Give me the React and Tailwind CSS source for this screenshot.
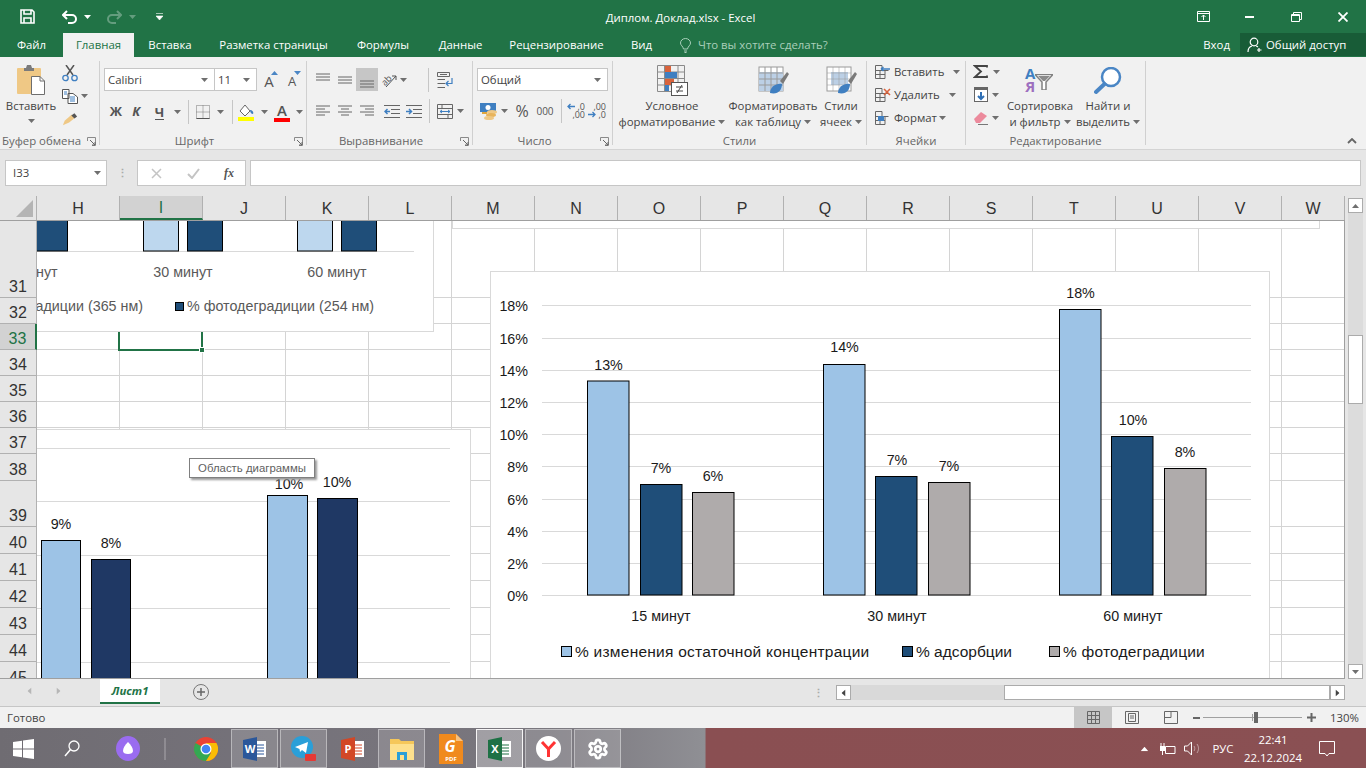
import { Settings } from "lucide-react";

const COLS = ["H", "I", "J", "K", "L", "M", "N", "O", "P", "Q", "R", "S", "T", "U", "V", "W"];
const ROWS = [
  { n: "31", h: "h-[77px]" },
  { n: "32", h: "h-[26px]" },
  { n: "33", h: "h-[26px]", active: true },
  { n: "34", h: "h-[26px]" },
  { n: "35", h: "h-[26px]" },
  { n: "36", h: "h-[26px]" },
  { n: "37", h: "h-[26px]" },
  { n: "38", h: "h-[27px]" },
  { n: "39", h: "h-[46px]" },
  { n: "40", h: "h-[27px]" },
  { n: "41", h: "h-[27px]" },
  { n: "42", h: "h-[27px]" },
  { n: "43", h: "h-[27px]" },
  { n: "44", h: "h-[27px]" },
  { n: "45", h: "h-[27px]" },
];

const Caret = ({ className = "", color = "#6f6f6f" }) => (
  <svg width="7" height="4" viewBox="0 0 7 4" className={`shrink-0 ${className}`}>
    <path d="M0 0H7L3.5 4Z" fill={color} />
  </svg>
);

const Launcher = () => (
  <svg width="9" height="9" viewBox="0 0 9 9" className="absolute right-[3px] -bottom-[1px]">
    <path d="M.5 4V.5H8.5V8.5H5" fill="none" stroke="#8a8a8a" />
    <path d="M3 3L8 8M5 8H8V5" fill="none" stroke="#666" />
  </svg>
);

const Group = ({ className, label, launcher, labelClass = "", children }) => (
  <div className={`relative flex flex-col h-[84px] shrink-0 border-r border-[#d0d0d0] ${className}`}>
    <div className="h-[73px]">{children}</div>
    <div className={`h-[11px] leading-[14px] text-center whitespace-nowrap text-[#666] ${labelClass}`}>{label}</div>
    {launcher && <Launcher />}
  </div>
);

const Slot = ({ className = "", children }) => (
  <div className={`flex items-center justify-center shrink-0 ${className}`}>{children}</div>
);

const VSep = () => <div className="w-px h-[24px] bg-[#c6c6c6] shrink-0" />;

const Lines = ({ ys, xs }) => (
  <svg width="16" height="16" viewBox="0 0 16 16">
    {ys.map((y, i) => (
      <path key={y} d={`M${xs ? xs[i][0] : 1} ${y}H${xs ? xs[i][1] : 15}`} stroke="#666" />
    ))}
  </svg>
);

const PasteIcon = () => (
  <svg width="30" height="30" viewBox="0 0 30 30">
    <rect x="1" y="3" width="24" height="26" rx="1" fill="#efc885" />
    <path d="M8 3H10L11 0H15L16 3H18V6H8Z" fill="#7b7b7b" />
    <path d="M15.500 11.500H24L28.500 16V29.500H15.500Z" fill="#fff" stroke="#6e6e6e" />
    <path d="M24 11.500V16H28.500" fill="none" stroke="#6e6e6e" />
  </svg>
);

const ScissorsIcon = () => (
  <svg width="16" height="17" viewBox="0 0 16 17">
    <path d="M5 10L12 0M11 10L4 0" stroke="#555" strokeWidth="1.500" />
    <circle cx="3.500" cy="13" r="2.700" fill="none" stroke="#3f7fc1" strokeWidth="1.300" />
    <circle cx="12.500" cy="13" r="2.700" fill="none" stroke="#3f7fc1" strokeWidth="1.300" />
  </svg>
);

const CopyIcon = () => (
  <svg width="16" height="15" viewBox="0 0 16 15">
    <path d="M.5.5H7V9.500H.5Z M6 4.500H11L15.500 8V14.500H6Z" fill="#fff" stroke="#555" />
    <path d="M2 3H5M2 5H5M8 8H13M8 10H13M8 12H13" stroke="#3f7fc1" />
  </svg>
);

const BrushIcon = () => (
  <svg width="18" height="15" viewBox="0 0 18 15">
    <path d="M11 2L14 6L8 11L1 14L3 9Z" fill="#efc885" />
    <path d="M10.500 3L14 0.500L17 4L14 6.500Z" fill="#555" />
  </svg>
);

const BigA = ({ up }) => (
  <div className="relative w-[17px] h-[18px] text-center text-[#555]">
    <span className={up ? "text-[15px] leading-[20px]" : "text-[13px] leading-[20px]"}>A</span>
    <svg width="7" height="4" viewBox="0 0 7 4" className="absolute right-0 top-0">
      <path d={up ? "M0 4H7L3.500 0Z" : "M0 0H7L3.500 4Z"} fill="#4a86c5" />
    </svg>
  </div>
);

const BordersIcon = () => (
  <svg width="14" height="14" viewBox="0 0 14 14">
    <path d="M.5.5H13.500V13.500H.5ZM.5 7H13.500M7 .5V13.500" fill="none" stroke="#777" strokeDasharray="1 1" />
    <path d="M.5 13.500H13.500" stroke="#555" />
  </svg>
);

const FillIcon = () => (
  <svg width="17" height="17" viewBox="0 0 17 17">
    <path d="M7 1L12 7L7 12L2 7Z" fill="#fff" stroke="#666" />
    <path d="M12 6C14 6 16 8 15 10C13 10 12 8 12 6Z" fill="#3f7fc1" />
    <rect y="13" width="16" height="4" fill="#ffff00" />
  </svg>
);

const FontColorIcon = () => (
  <div className="flex flex-col items-center w-[16px]">
    <span className="text-[15px] leading-[14px] font-semibold text-[#555]">A</span>
    <div className="w-[16px] h-[4px] bg-[#ff0000] mt-[1px]" />
  </div>
);

const OrientIcon = () => (
  <svg width="17" height="17" viewBox="0 0 17 17">
    <text x="0" y="12" transform="rotate(-45 6 9)" fontSize="9" fill="#555">ab</text>
    <path d="M5 16L15 5M15 5H11M15 5V9" stroke="#555" fill="none" />
  </svg>
);

const WrapIcon = () => (
  <svg width="16" height="16" viewBox="0 0 16 16">
    <path d="M.5.5H12.500V4.500H.5ZM.5 7.500H8M.5 11.500H8M.5 15.500H8" fill="none" stroke="#666" />
    <path d="M3 2.500H10" stroke="#666" />
    <path d="M15 6V11.500H9M11.500 9L9 11.500L11.500 14" fill="none" stroke="#3f7fc1" strokeWidth="1.200" />
  </svg>
);

const MergeIcon = () => (
  <svg width="16" height="15" viewBox="0 0 16 15">
    <path d="M.5.5H15.500V14.500H.5ZM.5 4.500H15.500M.5 10.500H15.500M5 .5V4.500M11 10.500V14.500" fill="none" stroke="#666" />
    <path d="M3 7.500H13M3 7.500L5 6M3 7.500L5 9M13 7.500L11 6M13 7.500L11 9" fill="none" stroke="#3f7fc1" />
  </svg>
);

const IndentIcon = ({ flip }) => (
  <svg width="16" height="13" viewBox="0 0 16 13">
    <path d="M0 .5H16M7 4.500H16M7 8.500H16M0 12.500H16" stroke="#666" />
    {flip ? (
      <path d="M0 6.500H5M3 4L5.500 6.500L3 9" fill="none" stroke="#3f7fc1" strokeWidth="1.500" />
    ) : (
      <path d="M6 6.500H1M3.500 4L1 6.500L3.500 9" fill="none" stroke="#3f7fc1" strokeWidth="1.500" />
    )}
  </svg>
);

const CurrencyIcon = () => (
  <svg width="18" height="17" viewBox="0 0 18 17">
    <rect x="0" y="0" width="16" height="9" fill="#3f7fc1" />
    <circle cx="8" cy="4.500" r="2.500" fill="#fff" />
    <rect x="2" y="9" width="5" height="2" fill="#e0a63e" />
    <ellipse cx="12" cy="9" rx="5" ry="2" fill="#efc885" />
    <ellipse cx="11" cy="12" rx="5" ry="2" fill="#e8b45c" />
    <ellipse cx="9" cy="15" rx="5" ry="2" fill="#efc885" />
  </svg>
);

const DecIcon = ({ more }) => (
  <div className="relative w-[18px] h-[16px] leading-[8px] text-[9px] text-[#555] text-right">
    <div>{more ? ",00" : ",0"}</div>
    <div>{more ? ",0" : ",00"}</div>
    <svg width="8" height="7" viewBox="0 0 8 7" className={more ? "absolute left-0 top-[8px]" : "absolute left-0 top-0"}>
      {more ? (
        <path d="M0 3.500H7M4.500 1L7 3.500L4.500 6" fill="none" stroke="#3f7fc1" strokeWidth="1.300" />
      ) : (
        <path d="M8 3.500H1M3.500 1L1 3.500L3.500 6" fill="none" stroke="#3f7fc1" strokeWidth="1.300" />
      )}
    </svg>
  </div>
);

const CondIcon = () => (
  <svg width="31" height="31" viewBox="0 0 31 31">
    <path d="M.5.5H27.500V26.500H.5ZM.5 7H27.500M.5 13.500H27.500M.5 20H27.500M7.500.5V26.500M21 .5V26.500" fill="none" stroke="#8a8a8a" />
    <rect x="8" y="1" width="6" height="6" fill="#d9633c" />
    <rect x="8" y="7" width="12" height="6" fill="#3f7fc1" />
    <rect x="8" y="14" width="9" height="6" fill="#d9633c" />
    <rect x="8" y="20" width="4" height="6" fill="#3f7fc1" />
    <rect x="14.500" y="17.500" width="16" height="13" fill="#fff" stroke="#555" />
    <path d="M19 22H26M19 26H26M25 20L20 28" stroke="#444" />
  </svg>
);

const TableStyleIcon = ({ blue }) => (
  <svg width="31" height="30" viewBox="0 0 31 30">
    <rect x="1" y="1" width="24" height="24" fill="#fff" stroke="#9a9a9a" />
    <rect x={blue ? 1 : 5} y={6} width={blue ? 24 : 17} height={blue ? 19 : 13} fill="#bcd0e6" />
    <path d="M1 7H25M1 13H25M1 19H25M7 1V25M13 1V25M19 1V25" stroke="#9a9a9a" strokeOpacity={blue ? 1 : 0.5} />
    <path d="M22 15L29 6L31 8L25 18Z" fill="#7a7a7a" />
    <path d="M12 27C12 21 18 17 24 18C24 24 20 29 12 27Z" fill="#3f7fc1" />
  </svg>
);

const CellIcon = ({ kind }) => (
  <svg width="17" height="16" viewBox="0 0 17 16">
    <path d="M1.500 1.500H8V6.500H14.500M1.500 1.500V14.500H11V6.500M1.500 6.500H8M1.500 10.500H11M6 6.500V14.500" fill="none" stroke="#666" />
    {kind === "ins" && <path d="M16 5H7M7 5L9.500 3M7 5L9.500 7" fill="none" stroke="#3f7fc1" strokeWidth="1.500" />}
    {kind === "del" && <path d="M10 2L16 8M16 2L10 8" stroke="#d9633c" strokeWidth="1.600" />}
    {kind === "fmt" && <rect x="4" y="6" width="6" height="5" fill="#3f7fc1" />}
  </svg>
);

const SumIcon = () => (
  <svg width="15" height="13" viewBox="0 0 15 13">
    <path d="M14 2.500V1H2L8 6.500L2 12H14V10.500" fill="none" stroke="#444" strokeWidth="1.800" />
  </svg>
);

const FillDownIcon = () => (
  <svg width="14" height="15" viewBox="0 0 14 15">
    <rect x=".5" y=".5" width="13" height="14" fill="#fff" stroke="#666" />
    <rect width="14" height="3" fill="#666" />
    <path d="M7 5V12M4 9L7 12L10 9" fill="none" stroke="#2f6fb5" strokeWidth="2" />
  </svg>
);

const EraserIcon = () => (
  <svg width="15" height="14" viewBox="0 0 15 14">
    <path d="M1 8L8 1L14 5L7 12H3Z" fill="#ec8a9c" />
    <path d="M5 13.500H15" stroke="#777" />
  </svg>
);

const SortIcon = () => (
  <div className="flex items-start w-[30px] h-[28px]">
    <div className="flex flex-col items-center leading-[13px] text-[15px] font-bold">
      <span className="text-[#3f7fc1]">А</span>
      <span className="text-[#9d6fbf]">Я</span>
    </div>
    <svg width="18" height="16" viewBox="0 0 18 16" className="mt-[7px]">
      <path d="M0 .5H18L11 8V16H7V8Z" fill="#fff" stroke="#808080" strokeWidth="1.500" />
      <path d="M3 2H15L10 7H8Z" fill="#8a8a8a" />
    </svg>
  </div>
);

const FindIcon = () => (
  <svg width="28" height="28" viewBox="0 0 28 28">
    <circle cx="17" cy="10" r="9" fill="#fff" stroke="#4a86c5" strokeWidth="2.500" />
    <path d="M10.500 17L2 25" stroke="#4a86c5" strokeWidth="4" strokeLinecap="round" />
  </svg>
);

const TitleBar = () => (
  <div className="flex items-center h-[33px] text-white relative">
    <Slot className="w-[54px]">
      <svg width="15" height="15" viewBox="0 0 15 15">
        <path d="M1 1H12L14 3V14H1Z M4 1V5H11V1 M4 14V9H11V14" fill="none" stroke="#fff" strokeWidth="1.600" />
      </svg>
    </Slot>
    <Slot className="w-[26px] ml-[3px]">
      <svg width="16" height="14" viewBox="0 0 16 14">
        <path d="M1 5H10A4 4 0 0 1 10 13H6M5 1L1 5L5 9" fill="none" stroke="#fff" strokeWidth="2" />
      </svg>
    </Slot>
    <Caret color="#fff" className="ml-[1px]" />
    <Slot className="w-[30px] opacity-30 ml-[8px]">
      <svg width="16" height="14" viewBox="0 0 16 14">
        <path d="M15 5H6A4 4 0 0 0 6 13H10M11 1L15 5L11 9" fill="none" stroke="#fff" strokeWidth="2" />
      </svg>
    </Slot>
    <Caret color="#fff" className="opacity-30" />
    <Slot className="w-[40px] ml-[3px]">
      <svg width="7" height="7" viewBox="0 0 7 7">
        <path d="M0 .5H7M0 3H7L3.500 7Z" fill="#fff" stroke="#fff" strokeWidth=".6" />
      </svg>
    </Slot>
    <div className="flex-1 text-center pl-[2px] pt-[2px]">Диплом. Доклад.xlsx - Excel</div>
    <Slot className="w-[46px]">
      <svg width="13" height="11" viewBox="0 0 13 11">
        <path d="M.5.5H12.500V10.500H.5ZM.5 2.500H12.500M6.500 9V4M4.500 6L6.500 4L8.500 6" fill="none" stroke="#fff" />
      </svg>
    </Slot>
    <Slot className="w-[47px]"><div className="w-[9px] h-[2px] bg-white" /></Slot>
    <Slot className="w-[47px]">
      <svg width="11" height="10" viewBox="0 0 11 10">
        <path d="M.5 2.500H8.500V9.500H.5ZM2.500 2.500V.5H10.500V7.500H8.500M.5 3.500H8.500" fill="none" stroke="#fff" />
      </svg>
    </Slot>
    <Slot className="w-[46px]">
      <svg width="10" height="10" viewBox="0 0 10 10">
        <path d="M.5.5L9.500 9.500M9.500.5L.5 9.500" stroke="#fff" strokeWidth="1.800" />
      </svg>
    </Slot>
  </div>
);

const Tab = ({ className, active, children }) => (
  <div
    className={`flex items-center justify-center h-[24px] shrink-0 ${className} ${
      active ? "bg-[#f1f1f1] text-[#217346]" : "text-white"
    }`}
  >
    {children}
  </div>
);

const TabBar = () => (
  <div className="flex h-[24px]">
    <Tab className="w-[63px]">Файл</Tab>
    <Tab className="w-[71px]" active>Главная</Tab>
    <Tab className="w-[72px]">Вставка</Tab>
    <Tab className="w-[135px]">Разметка страницы</Tab>
    <Tab className="w-[84px]">Формулы</Tab>
    <Tab className="w-[71px]">Данные</Tab>
    <Tab className="w-[121px]">Рецензирование</Tab>
    <Tab className="w-[49px]">Вид</Tab>
    <div className="flex items-center text-[#a9cfba] ml-[14px]">
      <svg width="11" height="15" viewBox="0 0 11 15" className="mr-[7px]">
        <path d="M3.500 11C3 8 .5 7.500.5 5A5 4.500 0 0 1 10.500 5C10.500 7.500 8 8 7.500 11ZM4 13H7M4.500 14.500H6.500" fill="none" stroke="#a9cfba" />
      </svg>
      Что вы хотите сделать?
    </div>
    <div className="flex-1" />
    <div className="flex items-center text-white pr-[10px]">Вход</div>
    <div className="flex items-center w-[126px] h-[23px] bg-[#185c37] text-white pl-[7px]">
      <svg width="16" height="16" viewBox="0 0 16 16" className="mr-[3px]">
        <circle cx="7" cy="5" r="3.800" fill="none" stroke="#fff" strokeWidth="1.200" />
        <path d="M1 15C1 11 3 9.500 5 9M9 9C10 9.300 10.500 9.700 11 10M12 11V15M10 13H14.500" fill="none" stroke="#fff" strokeWidth="1.200" />
      </svg>
      Общий доступ
    </div>
  </div>
);

const Combo = ({ className, children }) => (
  <div className={`flex items-center justify-between h-[23px] bg-white border border-[#c6c6c6] pl-[3px] pr-[6px] text-[#444] ${className}`}>
    <span>{children}</span>
    <Caret />
  </div>
);

const Ribbon = () => (
  <div className="flex h-[93px] pt-[4px] bg-[#f1f1f1] border-b border-[#d4d4d4]">
    <Group className="w-[100px]" label="Буфер обмена" labelClass="pr-[16px]" launcher>
      <div className="flex">
        <div className="flex flex-col items-center w-[62px] pt-[4px] text-[#444]">
          <PasteIcon />
          <div className="leading-[16px] mt-[3px]">Вставить</div>
          <Caret className="mt-[5px]" />
        </div>
        <div className="flex flex-col pt-[1px]">
          <Slot className="w-[16px] h-[22px]"><ScissorsIcon /></Slot>
          <div className="flex items-center h-[24px]">
            <Slot className="w-[16px]"><CopyIcon /></Slot>
            <Caret className="ml-[3px]" />
          </div>
          <Slot className="w-[16px] h-[22px]"><BrushIcon /></Slot>
        </div>
      </div>
    </Group>

    <Group className="w-[207px]" label="Шрифт" labelClass="pr-[17px]" launcher>
      <div className="flex items-center mt-[7px] ml-[4px]">
        <Combo className="w-[111px]">Calibri</Combo>
        <Combo className="w-[43px] -ml-px">11</Combo>
        <Slot className="w-[22px] ml-[1px]"><BigA up /></Slot>
        <Slot className="w-[24px]"><BigA /></Slot>
      </div>
      <div className="flex items-center mt-[9px] ml-[6px] h-[24px] text-[#555]">
        <Slot className="w-[20px] font-bold text-[13px]">Ж</Slot>
        <Slot className="w-[20px] font-bold italic text-[13px]">К</Slot>
        <Slot className="w-[27px] font-bold text-[13px]"><span className="border-b border-[#555] leading-[14px]">Ч</span></Slot>
        <Caret className="ml-[1px]" />
        <div className="ml-[7px]"><VSep /></div>
        <Slot className="w-[28px]"><BordersIcon /></Slot>
        <Caret />
        <div className="ml-[8px]"><VSep /></div>
        <Slot className="w-[27px]"><FillIcon /></Slot>
        <Caret className="ml-[1px]" />
        <Slot className="w-[28px]"><FontColorIcon /></Slot>
        <Caret />
      </div>
    </Group>

    <Group className="w-[166px]" label="Выравнивание" labelClass="pr-[17px]" launcher>
      <div className="flex items-center mt-[7px] ml-[5px] h-[23px]">
        <Slot className="w-[22px]"><Lines ys={[2, 5, 8]} /></Slot>
        <Slot className="w-[22px]"><Lines ys={[5, 8, 11]} /></Slot>
        <Slot className="w-[22px] h-[23px] bg-[#c6c6c6]"><Lines ys={[9, 12, 15]} /></Slot>
        <Slot className="w-[22px]"><OrientIcon /></Slot>
        <Caret />
        <div className="ml-[21px]"><VSep /></div>
        <Slot className="w-[16px] ml-[8px]"><WrapIcon /></Slot>
      </div>
      <div className="flex items-center mt-[8px] ml-[5px] h-[24px]">
        <Slot className="w-[22px]"><Lines ys={[3, 6, 9, 12]} xs={[[1, 15], [1, 10], [1, 15], [1, 10]]} /></Slot>
        <Slot className="w-[22px]"><Lines ys={[3, 6, 9, 12]} xs={[[1, 15], [4, 12], [1, 15], [4, 12]]} /></Slot>
        <Slot className="w-[22px]"><Lines ys={[3, 6, 9, 12]} xs={[[1, 15], [6, 15], [1, 15], [6, 15]]} /></Slot>
        <Slot className="w-[28px]"><IndentIcon /></Slot>
        <Slot className="w-[16px]"><IndentIcon flip /></Slot>
        <Slot className="w-[14px]"><VSep /></Slot>
        <Slot className="w-[18px]"><MergeIcon /></Slot>
        <Caret className="ml-[3px]" />
      </div>
    </Group>

    <Group className="w-[140px]" label="Число" labelClass="pr-[16px]" launcher>
      <Combo className="w-[131px] ml-[4px] mt-[7px]">Общий</Combo>
      <div className="flex items-center mt-[8px] ml-[6px] h-[24px] text-[#555]">
        <Slot className="w-[20px]"><CurrencyIcon /></Slot>
        <Caret className="ml-[2px]" />
        <Slot className="w-[28px] text-[16px]">%</Slot>
        <Slot className="w-[18px] text-[10px]">000</Slot>
        <Slot className="w-[9px] ml-[3px]"><VSep /></Slot>
        <Slot className="w-[20px]"><DecIcon /></Slot>
        <Slot className="w-[22px]"><DecIcon more /></Slot>
      </div>
    </Group>

    <Group className="w-[254px]" label="Стили">
      <div className="flex text-[#444] leading-[16px]">
        <div className="flex flex-col items-center w-[118px] shrink-0">
          <Slot className="w-[31px] h-[31px] mt-[4px]"><CondIcon /></Slot>
          <div className="mt-[2px]">Условное</div>
          <div className="flex items-center">форматирование<Caret className="ml-[3px]" /></div>
        </div>
        <div className="flex flex-col items-center w-[84px] shrink-0">
          <Slot className="w-[31px] h-[31px] mt-[4px]"><TableStyleIcon blue /></Slot>
          <div className="mt-[2px]">Форматировать</div>
          <div className="flex items-center">как таблицу<Caret className="ml-[3px]" /></div>
        </div>
        <div className="flex flex-col items-center w-[52px] shrink-0">
          <Slot className="w-[31px] h-[31px] mt-[4px]"><TableStyleIcon /></Slot>
          <div className="mt-[2px]">Стили</div>
          <div className="flex items-center">ячеек<Caret className="ml-[3px]" /></div>
        </div>
      </div>
    </Group>

    <Group className="w-[99px]" label="Ячейки">
      <div className="flex flex-col pl-[7px] text-[#444] -mt-[1px]">
        <div className="flex items-center h-[23px]"><CellIcon kind="ins" /><span className="ml-[3px] mr-[9px]">Вставить</span><Caret /></div>
        <div className="flex items-center h-[23px]"><CellIcon kind="del" /><span className="ml-[3px] mr-[9px]">Удалить</span><Caret /></div>
        <div className="flex items-center h-[23px]"><CellIcon kind="fmt" /><span className="ml-[3px] mr-[2px]">Формат</span><Caret /></div>
      </div>
    </Group>

    <Group className="w-[180px]" label="Редактирование">
      <div className="flex text-[#444] leading-[16px]">
        <div className="flex flex-col pl-[7px] w-[41px] shrink-0 -mt-[1px]">
          <div className="flex items-center h-[23px]"><Slot className="w-[15px]"><SumIcon /></Slot><Caret className="ml-[5px]" /></div>
          <div className="flex items-center h-[23px]"><Slot className="w-[15px]"><FillDownIcon /></Slot><Caret className="ml-[4px]" /></div>
          <div className="flex items-center h-[23px]"><Slot className="w-[15px]"><EraserIcon /></Slot><Caret className="ml-[4px]" /></div>
        </div>
        <div className="flex flex-col items-center w-[66px] shrink-0">
          <Slot className="h-[31px] mt-[4px]"><SortIcon /></Slot>
          <div className="mt-[2px]">Сортировка</div>
          <div className="flex items-center">и фильтр<Caret className="ml-[3px]" /></div>
        </div>
        <div className="flex flex-col items-center w-[70px] shrink-0">
          <Slot className="h-[31px] mt-[4px]"><FindIcon /></Slot>
          <div className="mt-[2px]">Найти и</div>
          <div className="flex items-center">выделить<Caret className="ml-[3px]" /></div>
        </div>
      </div>
    </Group>

    <div className="flex-1 flex items-end justify-end pr-[9px] pb-[5px]">
      <svg width="10" height="6" viewBox="0 0 10 6">
        <path d="M1 5L5 1L9 5" fill="none" stroke="#666" strokeWidth="1.800" />
      </svg>
    </div>
  </div>
);

const FormulaBar = () => (
  <div className="flex items-center h-[46px] pb-[10px] pt-[10px] bg-[#e6e6e6] text-[#444]">
    <div className="flex items-center justify-between w-[102px] h-[26px] ml-[5px] pl-[7px] pr-[5px] bg-white border border-[#c6c6c6]">
      <span>I33</span>
      <Caret />
    </div>
    <div className="w-[30px] flex justify-center text-[#aaa] leading-[10px] text-[11px] font-bold">⋮</div>
    <div className="flex items-center w-[109px] h-[26px] bg-white border border-[#c6c6c6]">
      <Slot className="w-[37px]">
        <svg width="11" height="11" viewBox="0 0 11 11"><path d="M1 1L10 10M10 1L1 10" stroke="#c4c4c4" strokeWidth="1.500" /></svg>
      </Slot>
      <Slot className="w-[36px]">
        <svg width="13" height="11" viewBox="0 0 13 11"><path d="M1 6L5 10L12 1" fill="none" stroke="#c4c4c4" strokeWidth="2" /></svg>
      </Slot>
      <Slot className="w-[36px] text-[#555] italic font-bold text-[12px] [font-family:'Liberation_Serif',serif]">fx</Slot>
    </div>
    <div className="flex-1 h-[26px] ml-[4px] mr-[5px] bg-white border border-[#c6c6c6]" />
  </div>
);

const ChartText = ({ x, y, anchor = "middle", children, className = "fill-[#1a1a1a]" }) => (
  <text x={x} y={y} textAnchor={anchor} dominantBaseline="central" className={className}>
    {children}
  </text>
);

const Bar = ({ x, w, top, bottom, fill }) => (
  <rect x={x} y={top} width={w} height={bottom - top} fill={fill} stroke="#000" strokeWidth="1" />
);

const TopLeftChart = () => (
  <div className="absolute left-0 top-0 w-[397px] h-[111px] bg-white border-r border-b border-[#d9d9d9]">
    <svg width="396" height="110" viewBox="37 221 396 110" className="text-[14.3px] [font-family:'Liberation_Sans',sans-serif]">
      <path d="M37 251.500H414" stroke="#d9d9d9" />
      {[
        [30, 37.500, "#1f4e79"],
        [143.500, 35, "#bdd7ee"],
        [187.500, 35, "#1f4e79"],
        [297.500, 35, "#bdd7ee"],
        [341.500, 35, "#1f4e79"],
      ].map(([x, w, fill]) => (
        <Bar key={x} x={x} w={w} top={215} bottom={251} fill={fill} />
      ))}
      <ChartText x={28} y={272} className="fill-[#595959]">15 минут</ChartText>
      <ChartText x={183} y={272} className="fill-[#595959]">30 минут</ChartText>
      <ChartText x={337} y={272} className="fill-[#595959]">60 минут</ChartText>
      <ChartText x={143} y={306} anchor="end" className="fill-[#595959]">% фотодеградиции (365 нм)</ChartText>
      <rect x="175.500" y="302.500" width="8" height="8" fill="#1f4e79" stroke="#000" />
      <ChartText x={187} y={306} anchor="start" className="fill-[#595959]">% фотодеградиции (254 нм)</ChartText>
    </svg>
  </div>
);

const TopBand = () => (
  <div className="absolute left-[415px] top-0 w-[868px] h-[8px] bg-white border-l border-r border-b border-[#d9d9d9]" />
);

const LeftChart = () => (
  <div className="absolute left-0 top-[208px] w-[434px] h-[250px] bg-white border-t border-r border-[#d9d9d9]">
    <svg width="433" height="249" viewBox="37 430 433 249" className="text-[14.3px] [font-family:'Liberation_Sans',sans-serif]">
      {[448.500, 501.500, 555.500, 608.500, 662.500].map((y) => (
        <path key={y} d={`M37 ${y}H450`} stroke="#d9d9d9" />
      ))}
      <Bar x={41.500} w={39} top={540.500} bottom={700} fill="#9dc3e6" />
      <Bar x={91.500} w={39} top={559.500} bottom={700} fill="#1f3864" />
      <Bar x={267.500} w={40} top={495.500} bottom={700} fill="#9dc3e6" />
      <Bar x={317.500} w={40} top={498.500} bottom={700} fill="#1f3864" />
      <ChartText x={61} y={524}>9%</ChartText>
      <ChartText x={111} y={543}>8%</ChartText>
      <ChartText x={289} y={484}>10%</ChartText>
      <ChartText x={337} y={482}>10%</ChartText>
    </svg>
    <div className="absolute left-[152px] top-[28px] w-[126px] h-[20px] bg-white border border-[#7f7f7f] shadow-[2px_2px_2px_#9a9a9a] text-center text-[#5f5f5f] leading-[18px]">
      Область диаграммы
    </div>
  </div>
);

const AXIS = [
  ["18%", 305.500], ["16%", 338.500], ["14%", 370.500], ["12%", 402.500], ["10%", 434.500],
  ["8%", 466.500], ["6%", 499.500], ["4%", 531.500], ["2%", 563.500], ["0%", 595.500],
];

const BARS = [
  { x: 587.500, top: 381, fill: "#9dc3e6", label: "13%", lx: 608.500, ly: 365 },
  { x: 640.500, top: 484.500, fill: "#1f4e79", label: "7%", lx: 661, ly: 468 },
  { x: 692.500, top: 492.500, fill: "#afabab", label: "6%", lx: 713, ly: 476 },
  { x: 823.500, top: 364.500, fill: "#9dc3e6", label: "14%", lx: 844.500, ly: 347 },
  { x: 875.500, top: 476.500, fill: "#1f4e79", label: "7%", lx: 897, ly: 460 },
  { x: 928.500, top: 482.500, fill: "#afabab", label: "7%", lx: 949, ly: 466 },
  { x: 1059.500, top: 309.500, fill: "#9dc3e6", label: "18%", lx: 1080.500, ly: 293 },
  { x: 1111.500, top: 436.500, fill: "#1f4e79", label: "10%", lx: 1133, ly: 420 },
  { x: 1164.500, top: 468.500, fill: "#afabab", label: "8%", lx: 1185, ly: 452 },
];

const RightChart = () => (
  <div className="absolute left-[453px] top-[50px] w-[780px] h-[408px] bg-white border-l border-t border-r border-[#d9d9d9]">
    <svg width="778" height="407" viewBox="491 272 778 407" className="text-[14.3px] [font-family:'Liberation_Sans',sans-serif]">
      {AXIS.map(([t, y]) => (
        <g key={t}>
          <path d={`M542 ${y}H1251`} stroke="#d9d9d9" />
          <ChartText x={528} y={y} anchor="end">{t}</ChartText>
        </g>
      ))}
      {BARS.map((b) => (
        <g key={b.x}>
          <Bar x={b.x} w={41.500} top={b.top} bottom={595} fill={b.fill} />
          <ChartText x={b.lx} y={b.ly}>{b.label}</ChartText>
        </g>
      ))}
      <ChartText x={661} y={616}>15 минут</ChartText>
      <ChartText x={897} y={616}>30 минут</ChartText>
      <ChartText x={1133} y={616}>60 минут</ChartText>
      <rect x="561.500" y="646.500" width="10" height="10" fill="#9dc3e6" stroke="#000" />
      <ChartText x={575} y={651} anchor="start" className="fill-[#1a1a1a] text-[15.5px] tracking-[0.25px]">% изменения остаточной концентрации</ChartText>
      <rect x="902.500" y="646.500" width="10" height="10" fill="#1f4e79" stroke="#000" />
      <ChartText x={916} y={651} anchor="start" className="fill-[#1a1a1a] text-[15.5px]">% адсорбции</ChartText>
      <rect x="1049.500" y="646.500" width="10" height="10" fill="#afabab" stroke="#000" />
      <ChartText x={1063} y={651} anchor="start" className="fill-[#1a1a1a] text-[15.5px] tracking-[0.2px]">% фотодеградиции</ChartText>
    </svg>
  </div>
);

const Sheet = () => (
  <div className="flex flex-col w-[1345px] shrink-0 [font-family:'Liberation_Sans',sans-serif]">
    <div className="flex h-[25px] bg-[#e6e6e6] border-b border-[#9f9f9f]">
      <div className="relative w-[37px] shrink-0 border-r border-[#b1b1b1]">
        <svg width="18" height="18" viewBox="0 0 18 18" className="absolute left-[16px] top-[4px]">
          <path d="M17 0V17H0Z" fill="#b4b4b4" />
        </svg>
      </div>
      {COLS.map((c) => (
        <div
          key={c}
          className={`flex items-center justify-center shrink-0 pt-[1px] text-[16px] border-r border-[#b1b1b1] ${c === "W" ? "w-[63px]" : "w-[83px]"} ${
            c === "I" ? "bg-[#d2d2d2] text-[#217346] border-b-2 border-b-[#217346]" : "text-[#333]"
          }`}
        >
          {c}
        </div>
      ))}
    </div>
    <div className="flex h-[458px] overflow-hidden border-b border-[#9f9f9f]">
      <div className="flex flex-col w-[37px] shrink-0 bg-[#e6e6e6]">
        {ROWS.map((r) => (
          <div
            key={r.n}
            className={`flex items-end justify-center pb-[1px] shrink-0 text-[16px] leading-[18px] border-b border-[#b1b1b1] ${r.h} ${
              r.active ? "bg-[#d2d2d2] text-[#217346] border-r-2 border-r-[#217346]" : "text-[#333] border-r border-r-[#b1b1b1]"
            }`}
          >
            {r.n}
          </div>
        ))}
      </div>
      <div className="relative flex-1 bg-white overflow-hidden border-r border-[#9f9f9f]">
        {ROWS.map((r) => (
          <div key={r.n} className={`flex shrink-0 ${r.h}`}>
            {COLS.map((c) => (
              <div key={c} className={`shrink-0 border-r border-b border-[#d4d4d4] ${c === "W" ? "w-[63px]" : "w-[83px]"}`} />
            ))}
          </div>
        ))}
        <div className="absolute left-[81px] top-[103px] w-[85px] h-[27px] border-2 border-[#217346]">
          <div className="absolute -right-[4px] -bottom-[4px] w-[6px] h-[6px] bg-[#217346] border border-white" />
        </div>
        <TopBand />
        <TopLeftChart />
        <LeftChart />
        <RightChart />
      </div>
    </div>
  </div>
);

const VScroll = () => (
  <div className="flex flex-col w-[21px] shrink-0 bg-[#e6e6e6] pl-[3px] pr-[3px]">
    <div className="flex flex-col flex-1 bg-[#dcdcdc]">
      <div className="h-[2px] bg-[#e6e6e6]" />
      <Slot className="h-[15px] bg-white border border-[#ababab]"><Caret className="rotate-180" /></Slot>
      <div className="h-[122px]" />
      <div className="h-[69px] bg-white border border-[#ababab]" />
      <div className="flex-1" />
      <Slot className="h-[15px] bg-white border border-[#ababab]"><Caret /></Slot>
    </div>
  </div>
);

const SheetTabs = () => (
  <div className="flex items-start h-[27px] bg-[#e6e6e6]">
    <div className="flex items-center w-[100px] h-[24px] pl-[26px] gap-[22px]">
      <Caret className="rotate-90 opacity-40" />
      <Caret className="-rotate-90 opacity-40" />
    </div>
    <div className="flex items-center justify-center w-[60px] h-[25px] bg-white border-b-2 border-[#217346] text-[#217346] font-bold italic">
      Лист1
    </div>
    <Slot className="w-[16px] h-[16px] mt-[5px] ml-[33px] rounded-full border border-[#777]">
      <svg width="8" height="8" viewBox="0 0 8 8"><path d="M4 0V8M0 4H8" stroke="#666" strokeWidth="1.500" /></svg>
    </Slot>
    <div className="flex-1" />
    <div className="text-[#aaa] text-[11px] font-bold leading-[28px] mr-[12px]">⋮</div>
    <div className="flex items-center mt-[6px] h-[15px] w-[509px] mr-[21px]">
      <Slot className="w-[15px] h-[15px] bg-white border border-[#ababab]"><Caret className="rotate-90" color="#444" /></Slot>
      <div className="w-[153px] h-[15px] bg-[#d9d9d9]" />
      <div className="flex-1 h-[15px] bg-white border border-[#ababab]" />
      <Slot className="w-[15px] h-[15px] bg-white border border-[#ababab]"><Caret className="-rotate-90" color="#444" /></Slot>
    </div>
  </div>
);

const StatusBar = () => (
  <div className="flex items-center h-[22px] bg-[#f1f1f1] border-t border-[#c6c6c6] text-[#444] pl-[7px]">
    <span>Готово</span>
    <div className="flex-1" />
    <Slot className="w-[38px] h-[21px] bg-[#c6c6c6]">
      <svg width="13" height="13" viewBox="0 0 13 13">
        <path d="M.5.5H12.500V12.500H.5ZM.5 4.500H12.500M.5 8.500H12.500M4.500 .5V12.500M8.500 .5V12.500" fill="none" stroke="#666" />
      </svg>
    </Slot>
    <Slot className="w-[39px]">
      <svg width="14" height="13" viewBox="0 0 14 13">
        <path d="M.5.5H13.500V12.500H.5Z M3.500 2.500H10.500V10.500H3.500Z M5 5H9M5 7H9" fill="none" stroke="#666" />
      </svg>
    </Slot>
    <Slot className="w-[39px]">
      <svg width="14" height="13" viewBox="0 0 14 13">
        <path d="M.5.5H13.500V12.500H.5Z M7 .5V6.500H.5" fill="none" stroke="#666" />
      </svg>
    </Slot>
    <div className="w-[7px] h-[2px] bg-[#666] ml-[3px]" />
    <div className="relative w-[99px] h-px bg-[#a0a0a0] ml-[3px]">
      <div className="absolute left-[51px] -top-[5px] w-[4px] h-[11px] bg-[#666]" />
      <div className="absolute left-[49px] -top-[3px] w-px h-[7px] bg-[#a0a0a0]" />
    </div>
    <svg width="9" height="9" viewBox="0 0 9 9" className="ml-[5px]"><path d="M4.500 0V9M0 4.500H9" stroke="#666" strokeWidth="2" /></svg>
    <span className="w-[27px] ml-[14px] mr-[9px] text-center whitespace-nowrap">130%</span>
  </div>
);

const Tile = ({ active, tile, children }) => (
  <div className="flex justify-center w-[49px] shrink-0 h-[39px]">
    <div
      className={`flex items-center justify-center w-[47px] h-[39px] ${
        active ? "bg-white/30 border border-white/90" : tile ? "bg-white/15 border border-white/40" : ""
      }`}
    >
      {children}
    </div>
  </div>
);

const OfficeIcon = ({ letter, main, rest, lines = "#fff" }) => (
  <svg width="24" height="24" viewBox="0 0 24 24">
    <rect x="9" y="4" width="14" height="16" fill="#fff" />
    <path d="M13 8H21M13 11H21M13 14H21M13 17H21" stroke={lines} />
    <path d="M0 3L14 0V24L0 21Z" fill={main} />
    <text x="7" y="16" textAnchor="middle" fontSize="11" fontWeight="700" fill={rest}>{letter}</text>
  </svg>
);

const Taskbar = () => (
  <div className="flex items-center h-[40px] pt-px text-white bg-[linear-gradient(90deg,#6f6c72_0%,#75727a_20%,#7a777e_40%,#8f8f94_51.6%,#8a4f52_51.7%,#8a5053_100%)]">
    <Slot className="w-[47px]">
      <svg width="21" height="20" viewBox="0 0 21 20">
        <path d="M0 3L9 1.700V9.500H0ZM10 1.500L21 0V9.500H10ZM0 10.500H9V18.300L0 17ZM10 10.500H21V20L10 18.500Z" fill="#fff" />
      </svg>
    </Slot>
    <Slot className="w-[50px]">
      <svg width="16" height="17" viewBox="0 0 16 17">
        <circle cx="10" cy="6" r="5" fill="none" stroke="#fff" strokeWidth="1.300" />
        <path d="M6.500 9.500L1 16" stroke="#fff" strokeWidth="1.500" />
      </svg>
    </Slot>
    <Slot className="w-[61px]">
      <svg width="24" height="25" viewBox="0 0 24 25">
        <ellipse cx="12" cy="12.500" rx="12" ry="12.500" fill="#9a6cf0" />
        <path d="M12 6C15 9 17 12 17 15C17 17 15 18 12 18C9 18 7 17 7 15C7 12 9 9 12 6Z" fill="#fff" />
      </svg>
    </Slot>
    <div className="w-[2px] h-[22px] border-x border-white/20 ml-[6px] mr-[15px]" />
    <Slot className="w-[49px]">
      <svg width="24" height="24" viewBox="0 0 24 24">
        <circle cx="12" cy="12" r="12" fill="#ea4335" />
        <path d="M12 12L1.600 18A12 12 0 0 1 1.600 6Z" fill="#34a853" />
        <path d="M12 24A12 12 0 0 1 1.600 18L7 9L17 17Z" fill="#34a853" />
        <path d="M12 24A12 12 0 0 0 22.400 6H12L17 16Z" fill="#fbbc05" />
        <circle cx="12" cy="12" r="5.500" fill="#fff" />
        <circle cx="12" cy="12" r="4.300" fill="#4285f4" />
      </svg>
    </Slot>
    <Tile tile><OfficeIcon letter="W" main="#2b579a" rest="#fff" lines="#2b579a" /></Tile>
    <Tile tile>
      <svg width="26" height="26" viewBox="0 0 26 26">
        <circle cx="11" cy="11" r="11" fill="#2a9fd8" />
        <path d="M4 11L17 6L15 17L11 14L9 16L8.500 13Z" fill="#fff" />
        <rect x="14" y="18" width="11" height="7" rx="1" fill="#e53935" />
      </svg>
    </Tile>
    <Tile><OfficeIcon letter="P" main="#d24726" rest="#fff" lines="#d24726" /></Tile>
    <Tile tile>
      <svg width="24" height="22" viewBox="0 0 24 22">
        <path d="M0 1H9L11 3H24V22H0Z" fill="#f5c75a" />
        <path d="M0 6H24V22H0Z" fill="#fde08d" />
        <path d="M7 22V14H17V22H14V17H10V22Z" fill="#2a9fd8" />
      </svg>
    </Tile>
    <Tile>
      <svg width="24" height="30" viewBox="0 0 24 30">
        <path d="M0 0H17L24 7V30H0Z" fill="#f08a1d" />
        <path d="M17 0L24 7H17Z" fill="#f9c27e" />
        <text x="11" y="18" textAnchor="middle" fontSize="16" fontWeight="700" fontStyle="italic" fill="#fff">G</text>
        <text x="12" y="27" textAnchor="middle" fontSize="6" fontWeight="700" fill="#fff">PDF</text>
      </svg>
    </Tile>
    <Tile active><OfficeIcon letter="X" main="#1e7145" rest="#fff" lines="#1e7145" /></Tile>
    <Tile tile>
      <svg width="25" height="25" viewBox="0 0 25 25">
        <circle cx="12.500" cy="12.500" r="12.500" fill="#fff" />
        <path d="M6 6L12.500 13V21" fill="none" stroke="#f33" strokeWidth="3" />
        <path d="M19 6L12.500 13" fill="none" stroke="#f33" strokeWidth="3" />
      </svg>
    </Tile>
    <Tile tile><Settings size={22} strokeWidth={3} color="#fff" /></Tile>
    <div className="flex-1" />
    <Caret color="#fff" className="rotate-180 mr-[12px] scale-110" />
    <svg width="16" height="12" viewBox="0 0 16 12" className="mr-[8px]">
      <path d="M5.500 3.500H15V10.500H5.500Z" fill="none" stroke="#fff" />
      <rect x="0" y="3" width="5" height="5" fill="#fff" />
      <path d="M1 0V3M4 0V3M2.500 8V12" stroke="#fff" />
    </svg>
    <svg width="16" height="15" viewBox="0 0 16 15" className="mr-[10px]">
      <path d="M.5 5H3.500L7.500 1V14L3.500 10H.5Z" fill="none" stroke="#fff" />
      <path d="M10 5C11 6 11 9 10 10M13 3C15 6 15 9 13 12" fill="none" stroke="#fff" strokeOpacity=".45" />
    </svg>
    <span className="w-[26px] text-center">РУС</span>
    <div className="flex flex-col items-center w-[72px] ml-[1px] leading-[18px] text-center">
      <span>22:41</span>
      <span>22.12.2024</span>
    </div>
    <svg width="16" height="16" viewBox="0 0 16 16" className="ml-[10px] mr-[31px]">
      <path d="M.5.5H15.500V12.500H10L8 15L6 12.500H.5Z" fill="none" stroke="#fff" />
    </svg>
  </div>
);

export default function App() {
  return (
    <div className="flex flex-col w-[1366px] h-[768px] overflow-hidden bg-[#217346] text-[11.4px] [font-family:'Open_Sans',sans-serif]">
      <TitleBar />
      <TabBar />
      <Ribbon />
      <FormulaBar />
      <div className="flex">
        <Sheet />
        <VScroll />
      </div>
      <SheetTabs />
      <StatusBar />
      <Taskbar />
    </div>
  );
}
